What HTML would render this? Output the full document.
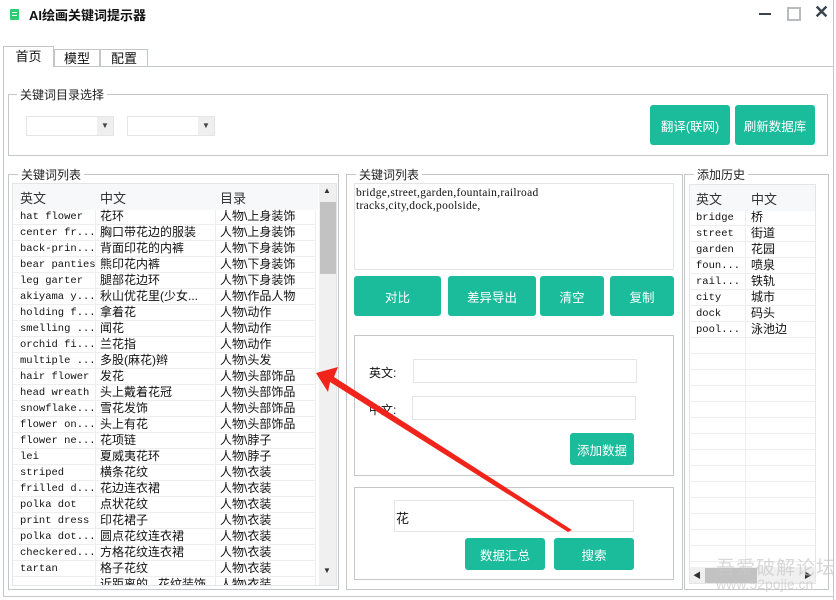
<!DOCTYPE html>
<html><head><meta charset="utf-8"><style>
*{margin:0;padding:0;box-sizing:border-box}
body{width:836px;height:600px;background:#fff;position:relative;overflow:hidden;font-family:"Liberation Sans","Noto Sans CJK SC",sans-serif;font-size:12px;color:#111}
.a{position:absolute}
.gb{position:absolute;border:1px solid #c4c7ca}
.gl{position:absolute;background:#fff;padding:0 3px;font-size:12px;color:#222}
.btn{position:absolute;background:#1abc9c;color:#fff;border-radius:3px;display:flex;align-items:center;justify-content:center;font-size:12.5px}
.inp{position:absolute;border:1px solid #e3e5e7;background:#fff}
.mono{font-family:"Liberation Mono","DejaVu Sans Mono",monospace;font-size:10.5px}
.row{position:absolute;height:16px;border-bottom:1px solid #eceeef;line-height:15px;white-space:nowrap}
.row .mono{top:1px}
</style></head><body>
<div class="a" style="right:2px;top:0;width:1px;height:600px;background:#c4c7ca"></div>
<div class="a" style="left:10px;top:9px;width:9px;height:11px;background:#2ecc71;border-radius:1px"></div>
<div class="a" style="left:12px;top:12px;width:5px;height:1px;background:#fff"></div>
<div class="a" style="left:12px;top:15px;width:5px;height:1px;background:#fff"></div>
<div class="a" style="left:29px;top:5px;font-weight:bold;font-size:13px">AI绘画关键词提示器</div>
<div class="a" style="left:759px;top:13px;width:12px;height:2px;background:#3a4450"></div>
<div class="a" style="left:787px;top:7px;width:14px;height:14px;border:2px solid #b8bcc0"></div>
<div class="a" style="left:814px;top:2px;font-size:18px;font-weight:bold;color:#3a4450">✕</div>
<!-- tabs -->
<div class="a" style="left:3px;top:66px;width:831px;height:531px;border:1px solid #c4c7ca"></div>
<div class="a" style="left:3px;top:46px;width:51px;height:21px;border:1px solid #c4c7ca;border-bottom:none;background:#fff;text-align:center;line-height:20px;font-size:13px">首页</div>
<div class="a" style="left:54px;top:49px;width:46px;height:18px;border:1px solid #c4c7ca;text-align:center;line-height:17px;font-size:13px">模型</div>
<div class="a" style="left:100px;top:49px;width:48px;height:18px;border:1px solid #c4c7ca;text-align:center;line-height:17px;font-size:13px">配置</div>
<!-- group 1 -->
<div class="gb" style="left:8px;top:94px;width:820px;height:62px"></div>
<div class="gl" style="left:17px;top:86px">关键词目录选择</div>
<div class="inp" style="left:26px;top:116px;width:88px;height:20px"><div class="a" style="right:0;top:0;width:16px;height:18px;background:#efefef;color:#444;font-size:8px;text-align:center;line-height:18px">▼</div></div>
<div class="inp" style="left:127px;top:116px;width:88px;height:20px"><div class="a" style="right:0;top:0;width:16px;height:18px;background:#efefef;color:#444;font-size:8px;text-align:center;line-height:18px">▼</div></div>
<div class="btn" style="left:650px;top:105px;width:80px;height:40px">翻译(联网)</div>
<div class="btn" style="left:735px;top:105px;width:80px;height:40px">刷新数据库</div>
<!-- left group -->
<div class="gb" style="left:8px;top:174px;width:331px;height:416px"></div>
<div class="gl" style="left:18px;top:166px">关键词列表</div>
<div class="a" style="left:12px;top:183px;width:325px;height:403px;border:1px solid #e3e5e7;overflow:hidden">
<div class="a" style="left:0;top:0;width:305px;height:26px;background:#f7f8f9;color:#333;font-size:13px"><span class="a" style="left:7px;top:4px">英文</span><span class="a" style="left:87px;top:4px">中文</span><span class="a" style="left:207px;top:4px">目录</span></div>
<div class="a" style="left:306px;top:0;width:18px;height:402px;background:#f0f0f0"></div>
<div class="a" style="left:307px;top:18px;width:16px;height:72px;background:#c2c2c2"></div>
<div class="a" style="left:310px;top:2px;font-size:8px;color:#333">▲</div>
<div class="a" style="left:310px;top:382px;font-size:8px;color:#333">▼</div>
<div class="a" style="left:82px;top:26px;width:1px;height:380px;background:#eceeef"></div>
<div class="a" style="left:202px;top:26px;width:1px;height:380px;background:#eceeef"></div>
<div class="a" style="left:302px;top:26px;width:1px;height:380px;background:#eceeef"></div>
<div class="a" id="rows" style="left:0;top:25px;width:303px;height:376px;overflow:hidden"></div>
</div>
<!-- middle group -->
<div class="gb" style="left:346px;top:174px;width:337px;height:416px"></div>
<div class="gl" style="left:356px;top:166px">关键词列表</div>
<div class="inp" style="left:354px;top:183px;width:320px;height:87px;padding:2px 1px;line-height:12px" ><span style="font-family:'Liberation Serif',serif;font-size:11.5px;letter-spacing:0.3px">bridge,street,garden,fountain,railroad<br>tracks,city,dock,poolside,</span></div>
<div class="btn" style="left:354px;top:276px;width:87px;height:40px">对比</div>
<div class="btn" style="left:448px;top:276px;width:88px;height:40px">差异导出</div>
<div class="btn" style="left:540px;top:276px;width:64px;height:40px">清空</div>
<div class="btn" style="left:610px;top:276px;width:64px;height:40px">复制</div>
<div class="gb" style="left:354px;top:335px;width:320px;height:141px"></div>
<div class="a" style="left:369px;top:364px">英文:</div>
<div class="inp" style="left:413px;top:359px;width:224px;height:24px"></div>
<div class="a" style="left:369px;top:401px">中文:</div>
<div class="inp" style="left:412px;top:396px;width:224px;height:24px"></div>
<div class="btn" style="left:570px;top:433px;width:64px;height:32px">添加数据</div>
<div class="gb" style="left:354px;top:487px;width:320px;height:93px"></div>
<div class="inp" style="left:394px;top:500px;width:240px;height:32px;padding:7px 1px;font-size:13px">花</div>
<div class="btn" style="left:465px;top:538px;width:80px;height:32px">数据汇总</div>
<div class="btn" style="left:554px;top:538px;width:80px;height:32px">搜索</div>
<!-- right group -->
<div class="gb" style="left:684px;top:174px;width:145px;height:416px"></div>
<div class="gl" style="left:694px;top:166px">添加历史</div>
<div class="a" style="left:689px;top:184px;width:127px;height:400px;border:1px solid #e3e5e7;overflow:hidden">
<div class="a" style="left:0;top:0;width:125px;height:26px;background:#f7f8f9;color:#333;font-size:13px"><span class="a" style="left:6px;top:4px">英文</span><span class="a" style="left:61px;top:4px">中文</span></div>
<div class="a" style="left:55px;top:26px;width:1px;height:370px;background:#eceeef"></div>
<div class="a" id="hrows" style="left:0;top:25px;width:125px;height:356px;overflow:hidden"></div>
<div class="a" style="left:0;top:382px;width:125px;height:17px;background:#f0f0f0"></div>
<div class="a" style="left:15px;top:383px;width:52px;height:15px;background:#c2c2c2"></div>
<div class="a" style="left:3px;top:385px;font-size:8px;color:#333">◀</div>
<div class="a" style="left:114px;top:385px;font-size:8px;color:#333">▶</div>
</div>
<div class="a" style="left:716px;top:553px;font-size:19px;color:rgba(200,200,200,.7);letter-spacing:1px">吾爱破解论坛</div>
<div class="a" style="left:716px;top:576px;font-size:14px;color:rgba(200,200,200,.7)">www.52pojie.cn</div>
<svg class="a" style="left:0;top:0" width="836" height="600"><polygon points="316,373 338,367 334,377 572,530 568,532 330,382 328,392" fill="#f0241a"/></svg>
<script>
var d=[["hat flower","花环","人物\\上身装饰"],["center fr...","胸口带花边的服装","人物\\上身装饰"],["back-prin...","背面印花的内裤","人物\\下身装饰"],["bear panties","熊印花内裤","人物\\下身装饰"],["leg garter","腿部花边环","人物\\下身装饰"],["akiyama y...","秋山优花里(少女...","人物\\作品人物"],["holding f...","拿着花","人物\\动作"],["smelling ...","闻花","人物\\动作"],["orchid fi...","兰花指","人物\\动作"],["multiple ...","多股(麻花)辫","人物\\头发"],["hair flower","发花","人物\\头部饰品"],["head wreath","头上戴着花冠","人物\\头部饰品"],["snowflake...","雪花发饰","人物\\头部饰品"],["flower on...","头上有花","人物\\头部饰品"],["flower ne...","花项链","人物\\脖子"],["lei","夏威夷花环","人物\\脖子"],["striped","横条花纹","人物\\衣装"],["frilled d...","花边连衣裙","人物\\衣装"],["polka dot","点状花纹","人物\\衣装"],["print dress","印花裙子","人物\\衣装"],["polka dot...","圆点花纹连衣裙","人物\\衣装"],["checkered...","方格花纹连衣裙","人物\\衣装"],["tartan","格子花纹","人物\\衣装"],["...","近距离的...花纹装饰","人物\\衣装"]];
var h="";d.forEach(function(r,i){h+='<div class="row" style="left:0;top:'+(i*16)+'px;width:303px"><span class="a mono" style="left:7px">'+r[0]+'</span><span class="a" style="left:87px;top:0">'+r[1]+'</span><span class="a" style="left:207px;top:0">'+r[2]+'</span></div>'});
document.getElementById('rows').innerHTML=h;
var e=[["bridge","桥"],["street","街道"],["garden","花园"],["foun...","喷泉"],["rail...","铁轨"],["city","城市"],["dock","码头"],["pool...","泳池边"]];
h="";for(var i=0;i<23;i++){var r=e[i]||["",""];h+='<div class="row" style="left:0;top:'+(i*16)+'px;width:125px"><span class="a mono" style="left:6px">'+r[0]+'</span><span class="a" style="left:61px;top:0">'+r[1]+'</span></div>'}
document.getElementById('hrows').innerHTML=h;
</script>
</body></html>
